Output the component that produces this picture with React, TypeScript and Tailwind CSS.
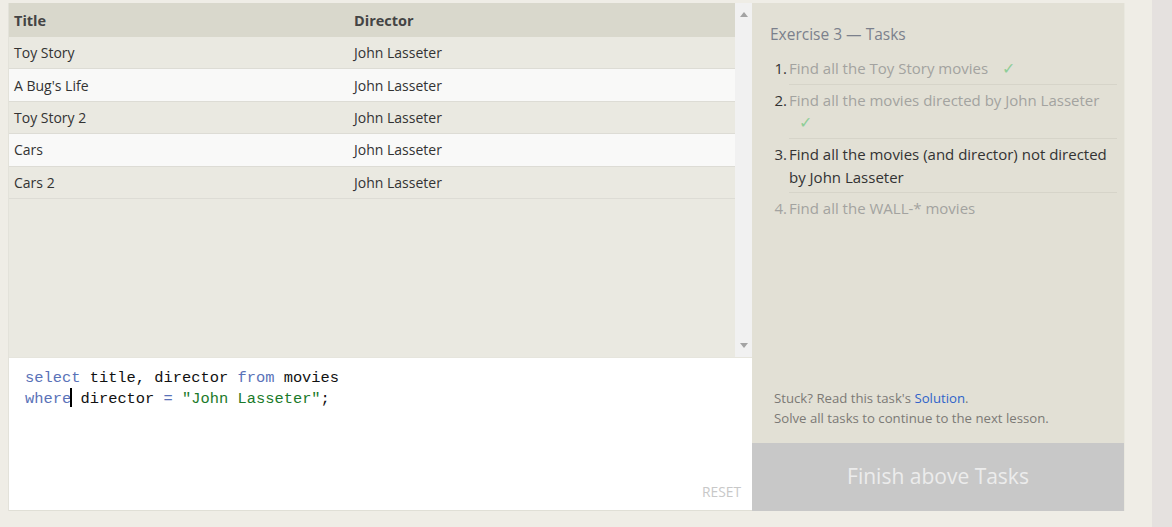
import React from "react";

const rows = [
  ["Toy Story", "John Lasseter"],
  ["A Bug's Life", "John Lasseter"],
  ["Toy Story 2", "John Lasseter"],
  ["Cars", "John Lasseter"],
  ["Cars 2", "John Lasseter"],
];

const Check = () => <span className="text-[#8fce98] ml-[10px] text-[16px]">✓</span>;

export default function App() {
  return (
    <div
      className="flex h-[527px] w-[1172px] bg-[#efede6] overflow-hidden"
      style={{ fontFamily: '"Open Sans", "Noto Sans", sans-serif' }}
    >
      <div className="flex pt-[3px] pl-[8px] h-[511px]">
        {/* Left panel */}
        <div className="flex flex-col w-[744px] border-l border-[#e3e2da]">
          <div className="flex h-[354px]">
            <div className="flex-1 bg-[#eae9e1] text-[14px] text-[#333]">
              <div className="flex h-[34px] items-center bg-[#d9d8cc] font-bold text-[14.5px] text-[#444] pt-[2px]">
                <div className="w-[340px] pl-[5px]">Title</div>
                <div className="pl-[5px]">Director</div>
              </div>
              {rows.map((r, i) => (
                <div
                  key={i}
                  className={
                    "flex h-[32.4px] items-center border-b border-[#dddcd5] " +
                    (i % 2 === 0 ? "bg-[#eae9e1]" : "bg-[#f9f9f8]")
                  }
                >
                  <div className="w-[340px] pl-[5px]">{r[0]}</div>
                  <div className="pl-[5px]">{r[1]}</div>
                </div>
              ))}
            </div>
            <div className="w-[17px] bg-[#f1f1f1] flex flex-col justify-between items-center py-[9px]">
              <svg width="8" height="5" viewBox="0 0 8 5">
                <polygon points="0,5 8,5 4,0" fill="#a3a3a3" />
              </svg>
              <svg width="8" height="5" viewBox="0 0 8 5">
                <polygon points="0,0 8,0 4,5" fill="#a3a3a3" />
              </svg>
            </div>
          </div>
          <div className="relative flex-1 bg-white border-t border-[#e6e5dd] border-b border-b-[#e0dfd6] pt-[10px] pl-[16px]">
            <pre
              className="text-[15.4px] leading-[20px] text-[#111]"
              style={{ fontFamily: '"Liberation Mono", "DejaVu Sans Mono", monospace' }}
            >
              <span className="text-[#5a72b8]">select</span> title, director{" "}
              <span className="text-[#5a72b8]">from</span> movies
              {"\n"}
              <span className="text-[#5a72b8]">where</span>
              <span className="inline-block w-[2px] h-[19px] bg-black align-[-4px] ml-[-1px] mr-[-1px]"></span>{" "}
              director <span className="text-[#5a72b8]">=</span>{" "}
              <span className="text-[#1b7a2a]">"John Lasseter"</span>;
            </pre>
            <div className="absolute right-[11px] bottom-[7px] text-[13.8px] text-[#c8c8c8]">RESET</div>
          </div>
        </div>

        {/* Right panel */}
        <div className="flex flex-col w-[373px] bg-[#e2e0d5] border-r border-[#e9e8df]">
          <div className="flex-1 flex flex-col pl-[18px] pr-[7px]">
            <div className="mt-[20px] text-[15.5px] text-[#7b808c]">Exercise 3 — Tasks</div>
            <ol className="mt-[11px] text-[15px] leading-[22.6px] text-[#a3a3a0]">
              <li className="flex">
                <span className="w-[19px] text-right pr-[2px] text-[#333]">1.</span>
                <div className="flex-1 pb-[4px] border-b border-[#d6d4c9] whitespace-nowrap">
                  Find all the Toy Story movies <Check />
                </div>
              </li>
              <li className="flex pt-[4px]">
                <span className="w-[19px] text-right pr-[2px] text-[#333]">2.</span>
                <div className="flex-1 pb-[4px] border-b border-[#d6d4c9] whitespace-nowrap">
                  Find all the movies directed by John Lasseter
                  <br />
                  <Check />
                </div>
              </li>
              <li className="flex pt-[4px]">
                <span className="w-[19px] text-right pr-[2px] text-[#333]">3.</span>
                <div className="flex-1 pb-[4px] border-b border-[#d6d4c9] text-[#333] whitespace-nowrap">
                  Find all the movies (and director) not directed
                  <br />
                  by John Lasseter
                </div>
              </li>
              <li className="flex pt-[4px]">
                <span className="w-[19px] text-right pr-[2px]">4.</span>
                <div className="flex-1">Find all the WALL-* movies</div>
              </li>
            </ol>
            <div className="mt-auto mb-[15px] pl-[4px] text-[13.2px] leading-[20px] text-[#7c7a75]">
              <div>
                Stuck? Read this task's <span className="text-[#2f63c9]">Solution</span>.
              </div>
              <div>Solve all tasks to continue to the next lesson.</div>
            </div>
          </div>
          <div className="h-[68px] bg-[#c8c8c8] flex items-center justify-center text-[21px] text-[#ececec]">
            Finish above Tasks
          </div>
        </div>
      </div>
      <div className="flex-1" />
      <div className="w-[20px] bg-[#e5e1df]" />
    </div>
  );
}
